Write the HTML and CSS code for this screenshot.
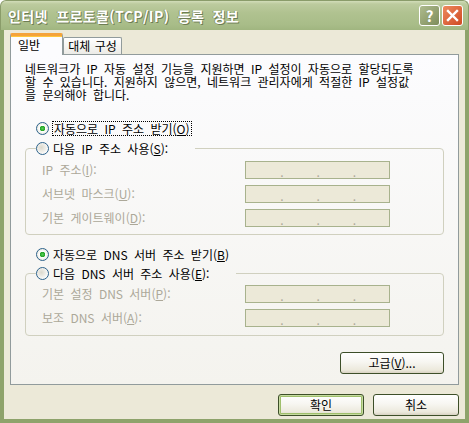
FILE: index.html
```html
<!DOCTYPE html>
<html lang="ko">
<head>
<meta charset="utf-8">
<title>인터넷 프로토콜(TCP/IP) 등록 정보</title>
<link rel="stylesheet" href="styles.css">
</head>
<body>
<div class="window">
  <div class="titlebar">
    <span class="title">인터넷 프로토콜(TCP/IP) 등록 정보</span>
    <div class="tb-buttons">
      <span class="tb-btn help">?</span>
      <span class="tb-btn close"><svg width="13" height="13" viewBox="0 0 13 13"><path d="M2 2 L11 11 M11 2 L2 11" stroke="#fff" stroke-width="2.4" stroke-linecap="square" fill="none"/></svg></span>
    </div>
  </div>
  <div class="frame">
    <div class="tabs">
      <div class="tab active">일반</div>
      <div class="tab">대체 구성</div>
    </div>
    <div class="panel">
      <p class="desc">네트워크가 IP 자동 설정 기능을 지원하면 IP 설정이 자동으로 할당되도록<br>할 수 있습니다. 지원하지 않으면, 네트워크 관리자에게 적절한 IP 설정값<br>을 문의해야 합니다.</p>

      <div class="radio-row ip-auto"><span class="radio checked"></span><span class="focus">자동으로 IP 주소 받기(<u>O</u>)</span></div>
      <fieldset class="group group-ip">
        <legend><span class="radio"></span><span>다음 IP 주소 사용(<u>S</u>):</span></legend>
        <div class="fields">
          <div class="field"><span class="lbl">IP 주소(<u>I</u>):</span><div class="ipbox"><i></i><b>.</b><i></i><b>.</b><i></i><b>.</b><i></i></div></div>
          <div class="field"><span class="lbl">서브넷 마스크(<u>U</u>):</span><div class="ipbox"><i></i><b>.</b><i></i><b>.</b><i></i><b>.</b><i></i></div></div>
          <div class="field"><span class="lbl">기본 게이트웨이(<u>D</u>):</span><div class="ipbox"><i></i><b>.</b><i></i><b>.</b><i></i><b>.</b><i></i></div></div>
        </div>
      </fieldset>

      <div class="radio-row dns-auto"><span class="radio checked"></span><span>자동으로 DNS 서버 주소 받기(<u>B</u>)</span></div>
      <fieldset class="group group-dns">
        <legend><span class="radio"></span><span>다음 DNS 서버 주소 사용(<u>E</u>):</span></legend>
        <div class="fields">
          <div class="field"><span class="lbl">기본 설정 DNS 서버(<u>P</u>):</span><div class="ipbox"><i></i><b>.</b><i></i><b>.</b><i></i><b>.</b><i></i></div></div>
          <div class="field"><span class="lbl">보조 DNS 서버(<u>A</u>):</span><div class="ipbox"><i></i><b>.</b><i></i><b>.</b><i></i><b>.</b><i></i></div></div>
        </div>
      </fieldset>

      <div class="adv-row"><button class="btn adv">고급(<u>V</u>)...</button></div>
    </div>
    <div class="footer">
      <button class="btn default">확인</button>
      <button class="btn">취소</button>
    </div>
  </div>
</div>
</body>
</html>
```

FILE: styles.css
```css
* { box-sizing: border-box; }
html, body { margin: 0; padding: 0; background: #ffffff; }
body {
  font-family: "Noto Sans CJK KR", "Noto Sans", sans-serif;
  font-size: 12px;
  word-spacing: 3px;
  color: #000;
}
.window {
  width: 469px;
  height: 423px;
  display: flex;
  flex-direction: column;
}
.titlebar {
  height: 30px;
  flex: none;
  display: flex;
  align-items: center;
  justify-content: space-between;
  padding: 0 5px 0 7px;
  border-radius: 6px 6px 0 0;
  background: linear-gradient(#d2ddb9 0, #bccb9e 3px, #b0c290 12px, #a8bc88 24px, #9fb47e 30px);
  border: 1px solid #8a9c6a;
  border-bottom: none;
}
.title {
  color: #fff;
  font-weight: bold;
  font-size: 14px;
  line-height: 16px;
  letter-spacing: 0.4px;
  word-spacing: 4px;
  text-shadow: 1px 1px 0 #6e7d54, -1px 0 0 #8b9a6c;
}
.tb-buttons { display: flex; gap: 2px; }
.tb-btn {
  width: 21px;
  height: 21px;
  border: 1px solid #fff;
  border-radius: 3px;
  display: flex;
  align-items: center;
  justify-content: center;
  color: #fff;
  font-weight: bold;
  font-size: 15px;
  line-height: 1;
}
.help { background: linear-gradient(135deg, #aebb8e, #7e8d5a); }
.close { background: linear-gradient(135deg, #ee8a5e, #cf4a22); }

.frame {
  flex: 1;
  background: #ece9d8;
  border-left: 4px solid #8ea36b;
  border-right: 4px solid #8ea36b;
  border-bottom: 4px solid #8ea36b;
  padding: 3px 6px 0 6px;
  display: flex;
  flex-direction: column;
}
.tabs {
  display: flex;
  align-items: flex-end;
  height: 21px;
  position: relative;
  z-index: 1;
}
.tab {
  height: 17px;
  padding: 0 6px;
  border: 1px solid #919b9c;
  border-bottom: none;
  border-radius: 2px 2px 0 0;
  background: linear-gradient(#ffffff, #ecebe6);
  line-height: 15px;
  white-space: nowrap;
  word-spacing: 1px;
}
.tab.active {
  width: 53px;
  height: 22px;
  margin-bottom: -1px;
  padding: 0 0 0 7px;
  background: #fcfcfe;
  border-top: 3px solid #f4a33b;
  box-shadow: inset 0 1px 0 #ffc73c;
  line-height: 17px;
}
.tab:not(.active) { width: 59px; text-align: center; padding: 0; }

.panel {
  height: 331px;
  flex: none;
  border: 1px solid #919b9c;
  background: linear-gradient(#fcfcfe, #f4f3ee);
  padding: 7px 14px 0 14px;
  display: flex;
  flex-direction: column;
}
.desc {
  margin: 0;
  line-height: 13px;
  white-space: nowrap;
}
.radio-row {
  display: flex;
  align-items: center;
  gap: 4px;
  height: 13px;
  padding-left: 11px;
  line-height: 13px;
}
.ip-auto { margin-top: 21px; }
.dns-auto { margin-top: 13px; }
.focus { outline: 1px dotted #000; padding: 0 1px; }
.radio {
  width: 13px;
  height: 13px;
  flex: none;
  border-radius: 50%;
  border: 1px solid #2c628b;
  background: radial-gradient(circle at 40% 40%, #dcd9cd, #ffffff 80%);
}
.radio.checked {
  background: radial-gradient(circle at 50% 50%, #58d058 0, #21a121 2.5px, #fff 3px, #eae8dd 6px);
}
.group {
  margin: 7px 0 0 0;
  padding: 0 0 7px 0;
  border: 1px solid #d0d0bf;
  border-radius: 4px;
  min-width: 0;
}
.group-dns { margin-top: 6px; padding-bottom: 8px; }
.group legend {
  display: flex;
  align-items: center;
  gap: 4px;
  height: 13px;
  line-height: 13px;
  margin-left: 10px;
  padding: 0 27px 0 0;
}
.fields {
  display: flex;
  flex-direction: column;
  gap: 6px;
  margin-top: 6px;
  padding-left: 16px;
}
.group-dns .fields { margin-top: 5px; }
.field {
  display: grid;
  grid-template-columns: 203px 145px;
  align-items: center;
  height: 18px;
}
.lbl { color: #aca899; line-height: 14px; }
.ipbox {
  height: 18px;
  border: 1px solid #a8b28d;
  background: #ece9d8;
  display: grid;
  grid-template-columns: 1fr 2px 1fr 2px 1fr 2px 1fr;
  align-items: end;
}
.ipbox b {
  font-weight: normal;
  color: #aca899;
  font-size: 12px;
  line-height: 13px;
  text-align: center;
}
.adv-row {
  display: flex;
  justify-content: flex-end;
  margin-top: 16px;
}
.btn {
  font-family: inherit;
  font-size: 12px;
  word-spacing: inherit;
  color: #000;
  height: 22px;
  padding: 0;
  border: 1px solid #3d4f29;
  border-radius: 3px;
  background: linear-gradient(#ffffff 0, #f7f6f1 45%, #ece9dc 85%, #d8d2c2 100%);
  line-height: 18px;
}
.adv { width: 104px; }
.footer {
  display: flex;
  justify-content: flex-end;
  gap: 9px;
  margin-top: 9px;
}
.footer .btn { width: 86px; }
.btn.default {
  box-shadow: inset 0 0 0 1px #c6dba0, inset 0 0 0 2px #9fbf6c;
}
```
